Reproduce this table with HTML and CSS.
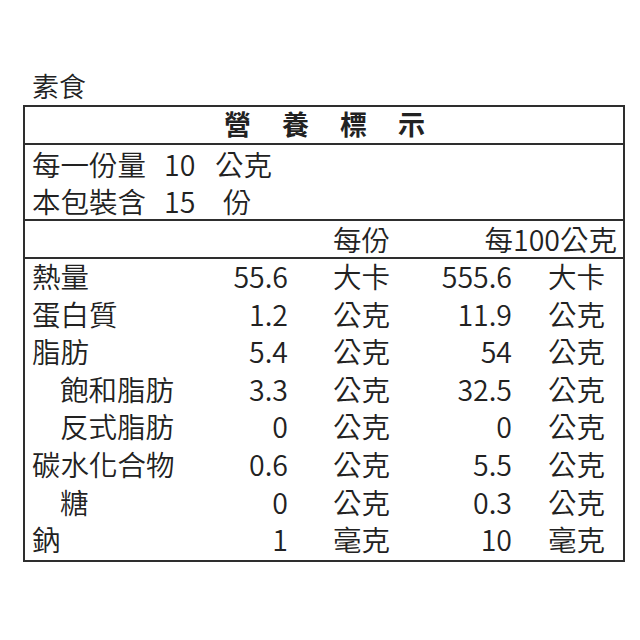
FILE: index.html
```html
<!DOCTYPE html>
<html lang="zh-Hant">
<head>
<meta charset="utf-8">
<title>營養標示</title>
<link rel="stylesheet" href="styles.css">
</head>
<body>
<div class="page">
  <div class="type">素食</div>
  <div class="label">
    <div class="title"><span>營</span><span>養</span><span>標</span><span>示</span></div>
    <div class="serving">
      <div class="srow"><span>每一份量</span><span>10</span><span>公克</span></div>
      <div class="srow"><span>本包裝含</span><span>15</span><span class="pad">份</span></div>
    </div>
    <div class="colhead">
      <span class="c-per">每份</span>
      <span class="c-100">每100公克</span>
    </div>
    <div class="data">
      <div class="row"><span>熱量</span><span class="num">55.6</span><span class="u1">大卡</span><span class="num">555.6</span><span class="u2">大卡</span></div>
      <div class="row"><span>蛋白質</span><span class="num">1.2</span><span class="u1">公克</span><span class="num">11.9</span><span class="u2">公克</span></div>
      <div class="row"><span>脂肪</span><span class="num">5.4</span><span class="u1">公克</span><span class="num">54</span><span class="u2">公克</span></div>
      <div class="row"><span class="ind">飽和脂肪</span><span class="num">3.3</span><span class="u1">公克</span><span class="num">32.5</span><span class="u2">公克</span></div>
      <div class="row"><span class="ind">反式脂肪</span><span class="num">0</span><span class="u1">公克</span><span class="num">0</span><span class="u2">公克</span></div>
      <div class="row"><span>碳水化合物</span><span class="num">0.6</span><span class="u1">公克</span><span class="num">5.5</span><span class="u2">公克</span></div>
      <div class="row"><span class="ind">糖</span><span class="num">0</span><span class="u1">公克</span><span class="num">0.3</span><span class="u2">公克</span></div>
      <div class="row"><span>鈉</span><span class="num">1</span><span class="u1">毫克</span><span class="num">10</span><span class="u2">毫克</span></div>
    </div>
  </div>
</div>
</body>
</html>
```
FILE: styles.css
```css
html, body {
  margin: 0;
  padding: 0;
  background: #ffffff;
}

body {
  font-family: "Noto Sans CJK TC", "Noto Sans CJK SC", "Noto Sans", sans-serif;
  font-weight: 350;
  color: #222222;
  font-size: 28.5px;
}

.page {
  padding: 67px 0 0 23px;
}

.type {
  font-size: 27px;
  line-height: 38px;
  height: 38px;
  padding-left: 9px;
}

.label {
  width: 598px;
  border: 2px solid #2e2e2e;
}

.title {
  display: flex;
  justify-content: center;
  gap: 31px;
  font-weight: 700;
  font-size: 27px;
  height: 36px;
  line-height: 33px;
  padding-left: 1px;
  border-bottom: 2px solid #2e2e2e;
}

.serving {
  padding: 0 0 0 7px;
  height: 76px;
  box-sizing: border-box;
  border-bottom: 2px solid #2e2e2e;
}

.srow {
  display: grid;
  grid-template-columns: 132px 51px auto;
  height: 37px;
  line-height: 37px;
}

.pad {
  padding-left: 8px;
}

.colhead {
  display: flex;
  justify-content: space-between;
  height: 36px;
  line-height: 35px;
  padding-right: 6px;
  border-bottom: 2px solid #2e2e2e;
}

.c-per {
  padding-left: 308px;
}

.data {
  padding-left: 7px;
}

.row {
  display: grid;
  grid-template-columns: 176px 80px 142px 82px 1fr;
  height: 37.6px;
  line-height: 34px;
}

.ind {
  padding-left: 28px;
}

.num {
  text-align: right;
}

.u1 {
  padding-left: 45px;
}

.u2 {
  padding-left: 36px;
}
```
